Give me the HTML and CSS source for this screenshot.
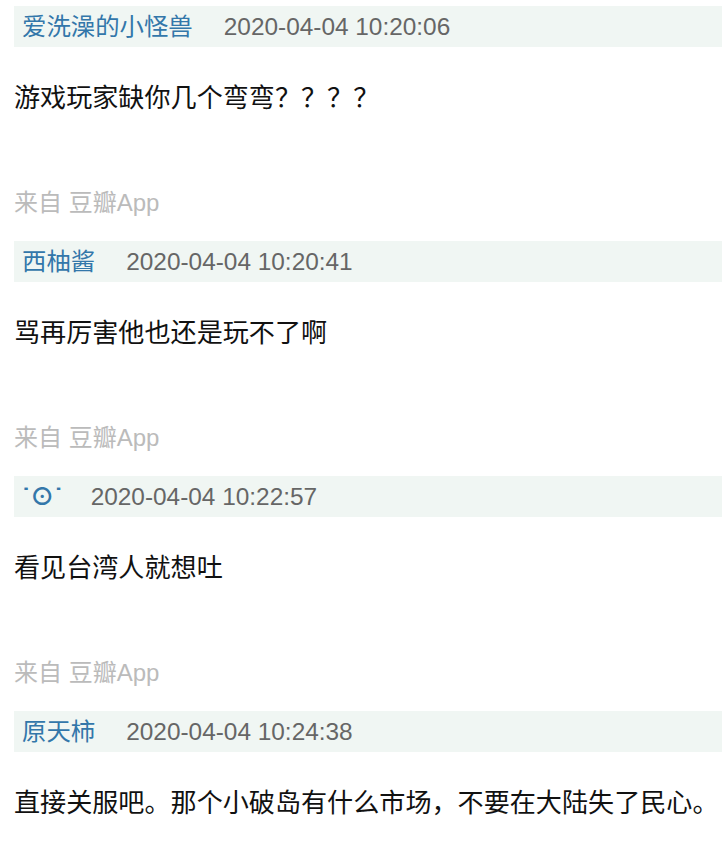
FILE: index.html
```html
<!DOCTYPE html>
<html lang="zh-CN">
<head>
    <meta charset="UTF-8">
    <title>回应</title>
    <link rel="stylesheet" href="styles.css">
</head>
<body>
    <div id="comments">
        <div class="item">
            <div class="head"><a class="name">爱洗澡的小怪兽</a><span class="time">2020-04-04 10:20:06</span></div>
            <p class="text">游戏玩家缺你几个弯弯？？？？</p>
            <p class="from">来自 豆瓣App</p>
        </div>
        <div class="item">
            <div class="head"><a class="name">西柚酱</a><span class="time">2020-04-04 10:20:41</span></div>
            <p class="text">骂再厉害他也还是玩不了啊</p>
            <p class="from">来自 豆瓣App</p>
        </div>
        <div class="item">
            <div class="head"><a class="name short">˙⊙˙</a><span class="time">2020-04-04 10:22:57</span></div>
            <p class="text">看见台湾人就想吐</p>
            <p class="from">来自 豆瓣App</p>
        </div>
        <div class="item">
            <div class="head"><a class="name">原天柿</a><span class="time">2020-04-04 10:24:38</span></div>
            <p class="text">直接关服吧。那个小破岛有什么市场，不要在大陆失了民心。</p>
        </div>
    </div>
</body>
</html>
```

FILE: styles.css
```css
*{
    margin: 0;
    padding: 0;
}
body{
    font-family: "Liberation Sans", "Noto Sans CJK SC", sans-serif;
    background: #fff;
}
#comments{
    padding: 6px 0 0 14px;
}
.item{
    height: 235px;
}
.item:last-child{
    height: auto;
}
.head{
    background: #f0f6f3;
    height: 41px;
    line-height: 41px;
    padding-left: 8px;
    font-size: 24.4px;
    white-space: nowrap;
}
.name{
    color: #3377aa;
    margin-right: 31px;
}
.name.short{
    margin-right: 28px;
    font-weight: bold;
}
.time{
    color: #666;
}
.text{
    margin-top: 31px;
    font-size: 26.1px;
    line-height: 40px;
    color: #111;
}
.from{
    margin-top: 67px;
    font-size: 24px;
    line-height: 36px;
    color: #bbb;
}
```
